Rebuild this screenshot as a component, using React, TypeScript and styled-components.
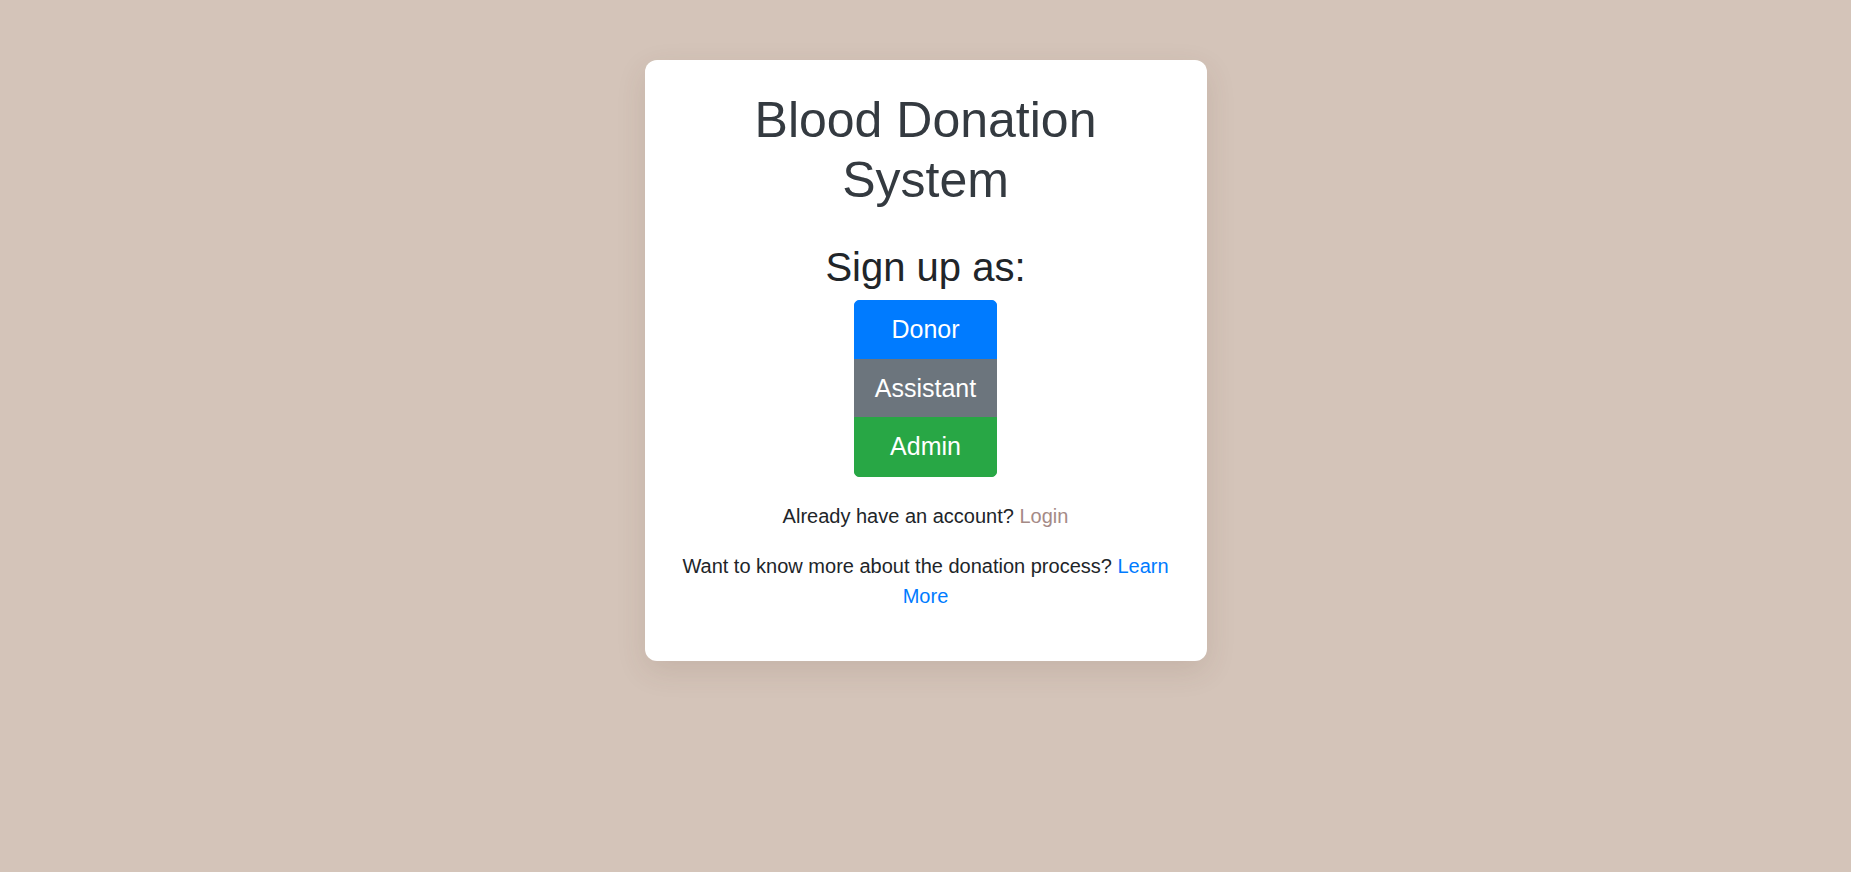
import React from "react";
import styled, { createGlobalStyle } from "styled-components";

const GlobalStyle = createGlobalStyle`
  html, body {
    margin: 0;
    padding: 0;
  }
  body {
    background: #d4c4b9;
    font-family: "Liberation Sans", Arial, sans-serif;
    font-size: 20px;
    line-height: 1.5;
    color: #212529;
    min-height: 872px;
  }
  * { box-sizing: border-box; }
`;

const Page = styled.div`
  display: flex;
  justify-content: center;
  align-items: flex-start;
  padding-top: 60px;
`;

const Card = styled.div`
  width: 562px;
  background: #ffffff;
  border-radius: 12px;
  padding: 30px;
  box-shadow: 0 10px 30px rgba(90, 60, 40, 0.12);
  display: flex;
  flex-direction: column;
  align-items: center;
  text-align: center;
`;

const Title = styled.h1`
  margin: 0 0 33px;
  font-size: 50px;
  line-height: 1.2;
  font-weight: 400;
  color: #343a40;
`;

const Subtitle = styled.h2`
  margin: 0 0 9px;
  font-size: 40px;
  line-height: 1.2;
  font-weight: 400;
  color: #212529;
`;

const ButtonGroup = styled.div`
  display: inline-flex;
  flex-direction: column;
  align-items: stretch;
  margin-bottom: 24px;
`;

const RoleButton = styled.button<{ $bg: string }>`
  font-family: "Liberation Sans", Arial, sans-serif;
  font-size: 25px;
  line-height: 1.5;
  padding: 10px 20px;
  color: #ffffff;
  background: ${(p) => p.$bg};
  border: 1px solid ${(p) => p.$bg};
  border-radius: 0;
  cursor: pointer;
  & + & {
    margin-top: -1px;
  }
  &:first-child {
    border-top-left-radius: 5px;
    border-top-right-radius: 5px;
  }
  &:last-child {
    border-bottom-left-radius: 5px;
    border-bottom-right-radius: 5px;
  }
`;

const Text = styled.p`
  margin: 0 0 20px;
  font-size: 20px;
  line-height: 1.5;
  color: #212529;
`;

const Link = styled.a<{ $color: string }>`
  color: ${(p) => p.$color};
  text-decoration: none;
`;

export default function App() {
  return (
    <>
      <GlobalStyle />
      <Page>
        <Card>
          <Title>Blood Donation System</Title>
          <Subtitle>Sign up as:</Subtitle>
          <ButtonGroup>
            <RoleButton $bg="#007bff">Donor</RoleButton>
            <RoleButton $bg="#6c757d">Assistant</RoleButton>
            <RoleButton $bg="#28a745">Admin</RoleButton>
          </ButtonGroup>
          <Text>
            Already have an account? <Link href="#" $color="#a58a86">Login</Link>
          </Text>
          <Text>
            Want to know more about the donation process?{" "}
            <Link href="#" $color="#007bff">Learn More</Link>
          </Text>
        </Card>
      </Page>
    </>
  );
}
